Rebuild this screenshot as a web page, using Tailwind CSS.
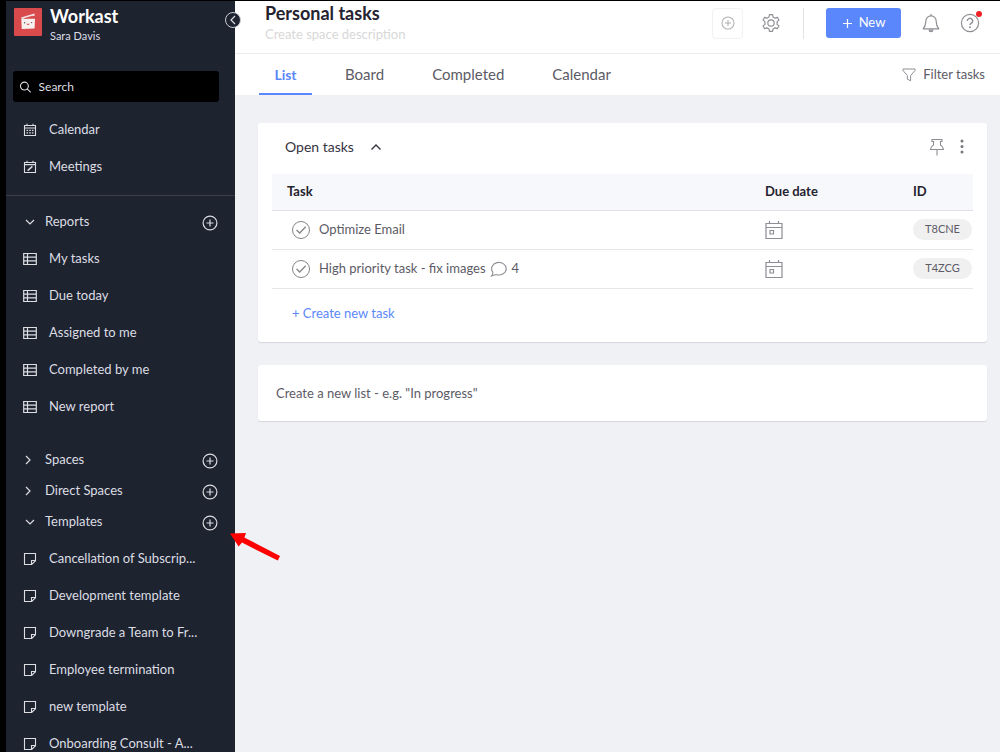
<!DOCTYPE html>
<html lang="en">
  <head>
    <meta charset="UTF-8" />
    <meta name="viewport" content="width=device-width, initial-scale=1.0" />
    <script src="https://cdn.jsdelivr.net/npm/@tailwindcss/browser@4"></script>
    <title>Workast - Personal tasks</title>
  </head>
  <body
    class="flex h-screen overflow-hidden border-t border-l-[6px] border-black bg-[#f0f1f5] font-[Lato,sans-serif] text-[13px] text-[#5c5b66]"
  >
    <!-- icons -->
    <svg class="hidden">
      <symbol id="plus-circle" viewBox="0 0 16 16" fill="none" stroke="currentColor">
        <circle cx="8" cy="8" r="6.9" stroke-width="1.2" />
        <path d="M8 4.5v7M4.5 8h7" stroke-width="1.2" />
      </symbol>
      <symbol id="down" viewBox="0 0 12 12" fill="none" stroke="currentColor">
        <path d="M2 4l4 4 4-4" stroke-width="1.2" />
      </symbol>
      <symbol id="right" viewBox="0 0 12 12" fill="none" stroke="currentColor">
        <path d="M4 2l4 4-4 4" stroke-width="1.2" />
      </symbol>
      <symbol id="report" viewBox="0 0 14 14" fill="none" stroke="currentColor">
        <path d="M.7 1.500h12.600v11H.7zM.7 5.200h12.600M.7 8.800h12.600M4.500 1.500v11" stroke-width="1.2" />
      </symbol>
      <symbol id="note" viewBox="0 0 14 14" fill="none" stroke="currentColor">
        <path d="M1.500 1.500h11v7.200l-3.800 3.800H1.500zM12.500 8.500h-4v4" stroke-width="1.1" />
      </symbol>
      <symbol id="check" viewBox="0 0 20 20" fill="none" stroke="currentColor">
        <circle cx="10" cy="10" r="8.5" />
        <path d="M5.500 10l3.200 3 6-6.200" stroke-width="1.3" />
      </symbol>
      <symbol id="date" viewBox="0 0 18 20" fill="none" stroke="currentColor">
        <path d="M1 3.500h16v15H1zM1 7.500h16M4.500 1v2.500M13.500 1v2.500" stroke-width="1.2" />
        <path d="M5 10.500h3.500V14H5z" stroke-width="1.2" />
      </symbol>
    </svg>

    <aside class="relative flex w-[229px] shrink-0 flex-col bg-[#1e2330] text-[#dcdde3]">
      <button
        class="absolute top-[11px] -right-[6px] z-10 flex size-4 items-center justify-center rounded-full border border-[#c9cad1] bg-[#1e2330]"
        aria-label="Collapse sidebar"
      >
        <svg class="size-3 rotate-180"><use href="#right" /></svg>
      </button>

      <div class="flex h-[70px] shrink-0 gap-2 px-2 pt-[7px]">
        <svg class="size-7 shrink-0" viewBox="0 0 28 28">
          <rect width="28" height="28" rx="1" fill="#d94a4c" />
          <path d="M7 9.600L20.400 5.400l.4 2.200L8 11z" fill="#f4e6e6" />
          <path d="M7.300 10.800H21L20.600 20.600 7.800 21z" fill="#f8efef" />
          <path d="M10.500 10.500l8-2.400" stroke="#d94a4c" stroke-width=".8" />
          <path d="M12.500 15.800q1.600 2.400 3.200 0z" fill="#d94a4c" />
          <circle cx="10.600" cy="14.800" r=".7" fill="#555" />
          <circle cx="17.600" cy="14.600" r=".7" fill="#555" />
        </svg>
        <div>
          <h1 class="text-lg leading-4 font-bold text-white">Workast</h1>
          <p class="text-[11px] leading-6">Sara Davis</p>
        </div>
      </div>

      <label
        class="mr-4 ml-[7px] flex h-[31px] shrink-0 items-center gap-[7px] rounded-[3px] bg-black px-[6px]"
      >
        <svg class="size-[14px]" viewBox="0 0 14 14" fill="none" stroke="currentColor" stroke-width="1.2">
          <circle cx="6" cy="6" r="4.4" />
          <path d="M9.200 9.200l3.800 3.800" />
        </svg>
        <input
          type="text"
          placeholder="Search"
          aria-label="Search"
          class="w-full min-w-0 text-xs outline-none placeholder:text-[#dcdde3]"
        />
      </label>

      <nav class="flex flex-col">
        <div class="mt-[9px] mb-[10px] flex flex-col">
          <a href="#" class="flex h-[37px] items-center gap-3 pl-[17px]">
            <svg class="size-[14px]" viewBox="0 0 14 14" fill="none" stroke="currentColor">
              <path d="M1.500 2.500h11v10h-11zM1.500 5h11M4 .8v1.700M10 .8v1.700" stroke-width="1.1" />
              <path d="M3.500 7.300h7M3.500 9.800h7" stroke-width="1.3" stroke-dasharray="1.6 1.1" />
            </svg>
            Calendar
          </a>
          <a href="#" class="flex h-[37px] items-center gap-3 pl-[17px]">
            <svg class="size-[14px]" viewBox="0 0 14 14" fill="none" stroke="currentColor">
              <path d="M1.500 2.500h11v10h-11zM1.500 4.600h11M4 .8v1.700M10 .8v1.700" stroke-width="1.1" />
              <path d="M4.600 10.600l4.800-4.200" stroke-width="1.5" />
            </svg>
            Meetings
          </a>
        </div>

        <div class="border-t border-[#3c3e4b] pt-[10px]">
          <div class="flex h-[31px] items-center px-[18px]">
            <button class="flex items-center gap-[9px]">
              <svg class="size-3"><use href="#down" /></svg>Reports
            </button>
            <button class="-mr-px ml-auto pt-[2px]" aria-label="Add report">
              <svg class="size-4"><use href="#plus-circle" /></svg>
            </button>
          </div>
          <div class="mt-[3px] flex flex-col">
            <a href="#" class="flex h-[37px] items-center gap-3 pl-[17px]">
              <svg class="size-[14px]"><use href="#report" /></svg>My tasks
            </a>
            <a href="#" class="flex h-[37px] items-center gap-3 pl-[17px]">
              <svg class="size-[14px]"><use href="#report" /></svg>Due today
            </a>
            <a href="#" class="flex h-[37px] items-center gap-3 pl-[17px]">
              <svg class="size-[14px]"><use href="#report" /></svg>Assigned to me
            </a>
            <a href="#" class="flex h-[37px] items-center gap-3 pl-[17px]">
              <svg class="size-[14px]"><use href="#report" /></svg>Completed by me
            </a>
            <a href="#" class="flex h-[37px] items-center gap-3 pl-[17px]">
              <svg class="size-[14px]"><use href="#report" /></svg>New report
            </a>
          </div>
        </div>

        <div class="mt-[19px]">
          <div class="flex h-[31px] items-center pr-[18px] pl-4">
            <button class="flex items-center gap-[11px]">
              <svg class="size-3"><use href="#right" /></svg>Spaces
            </button>
            <button class="-mr-px ml-auto pt-[2px]" aria-label="Add space">
              <svg class="size-4"><use href="#plus-circle" /></svg>
            </button>
          </div>
          <div class="flex h-[31px] items-center pr-[18px] pl-4">
            <button class="flex items-center gap-[11px]">
              <svg class="size-3"><use href="#right" /></svg>Direct Spaces
            </button>
            <button class="-mr-px ml-auto pt-[2px]" aria-label="Add direct space">
              <svg class="size-4"><use href="#plus-circle" /></svg>
            </button>
          </div>
          <div class="relative flex h-[31px] items-center px-[18px]">
            <button class="flex items-center gap-[9px]">
              <svg class="size-3"><use href="#down" /></svg>Templates
            </button>
            <button class="-mr-px ml-auto pt-[2px]" aria-label="Add template">
              <svg class="size-4"><use href="#plus-circle" /></svg>
            </button>
            <!-- arrow pointing at the add template button -->
            <svg
              class="absolute top-[26px] left-[223px] z-10 h-[30px] w-[52px]"
              viewBox="0 0 52 30"
              fill="#fe0000"
            >
              <path d="M1 1.500L17 1l-1.600 4.400L51 24l-2.200 4.600L13 10.600 9.600 14.600z" />
            </svg>
          </div>
          <div class="mt-[3px] flex flex-col">
            <a href="#" class="flex h-[37px] items-center gap-3 pl-[17px]">
              <svg class="size-[14px]"><use href="#note" /></svg>Cancellation of Subscrip...
            </a>
            <a href="#" class="flex h-[37px] items-center gap-3 pl-[17px]">
              <svg class="size-[14px]"><use href="#note" /></svg>Development template
            </a>
            <a href="#" class="flex h-[37px] items-center gap-3 pl-[17px]">
              <svg class="size-[14px]"><use href="#note" /></svg>Downgrade a Team to Fr...
            </a>
            <a href="#" class="flex h-[37px] items-center gap-3 pl-[17px]">
              <svg class="size-[14px]"><use href="#note" /></svg>Employee termination
            </a>
            <a href="#" class="flex h-[37px] items-center gap-3 pl-[17px]">
              <svg class="size-[14px]"><use href="#note" /></svg>new template
            </a>
            <a href="#" class="flex h-[37px] items-center gap-3 pl-[17px]">
              <svg class="size-[14px]"><use href="#note" /></svg>Onboarding Consult - A...
            </a>
          </div>
        </div>
      </nav>
    </aside>

    <main class="min-w-0 flex-1">
      <header class="flex h-[53px] justify-between border-b border-[#ededf0] bg-white pr-5 pl-[30px]">
        <div>
          <h2 class="text-lg leading-6 font-bold text-[#25232f]">Personal tasks</h2>
          <p class="leading-[18px] text-[#d8d8d8]">Create space description</p>
        </div>
        <div class="flex h-[44px] items-center text-[#8e8e94]">
          <button
            class="flex size-[31px] items-center justify-center rounded-sm border border-[#f1f1f2] text-[#b0b0b4]"
            aria-label="Add member"
          >
            <svg class="size-[14px]"><use href="#plus-circle" /></svg>
          </button>
          <button class="ml-[18px]" aria-label="Settings">
            <svg class="size-5" viewBox="0 0 24 24" fill="none" stroke="currentColor" stroke-width="1.4" stroke-linejoin="round">
              <path d="M9.600 4.800L10.100 2h3.800l.5 2.800 2.500 1.400 2.700-1 1.900 3.300-2.200 1.800v3.400l2.200 1.800-1.900 3.300-2.700-1-2.500 1.400-.5 2.800h-3.800l-.5-2.800-2.500-1.400-2.700 1-1.900-3.300 2.200-1.800v-3.400L2.500 8.500l1.900-3.300 2.700 1z" />
              <circle cx="12" cy="12" r="3.8" />
            </svg>
          </button>
          <div class="mx-[22px] h-[31px] w-px bg-[#e4e4e6]"></div>
          <button class="flex h-[30px] w-[75px] items-center justify-center gap-[6px] rounded-[3px] bg-[#5a87fb] text-white">
            <svg class="size-[11px]" viewBox="0 0 11 11" stroke="currentColor">
              <path d="M5.500 1v9M1 5.500h9" stroke-width="1.2" />
            </svg>
            New
          </button>
          <button class="ml-5" aria-label="Notifications">
            <svg class="size-5" viewBox="0 0 20 20" fill="none" stroke="currentColor" stroke-width="1.2" stroke-linejoin="round">
              <path d="M10 1v1.600M4.800 8.200a5.200 5.400 0 0 1 10.400 0c0 4 .8 5.400 2.600 7.600H2.200C4 13.600 4.800 12.200 4.800 8.200z" />
              <path d="M8.200 17.200a1.800 1.500 0 0 0 3.600 0z" />
            </svg>
          </button>
          <button class="relative ml-[19px]" aria-label="Help">
            <svg class="size-5" viewBox="0 0 20 20" fill="none" stroke="currentColor" stroke-width="1.2">
              <circle cx="10" cy="10" r="8.6" />
              <path d="M7.300 8a2.700 2.600 0 1 1 4.200 2.100c-1 .7-1.500 1-1.500 2" stroke-width="1.400" />
              <circle cx="10" cy="14.300" r=".4" />
            </svg>
            <span class="absolute -top-[2px] right-[-2px] size-[6px] rounded-full bg-[#ee2225]"></span>
          </button>
        </div>
      </header>

      <nav class="flex h-[41px] bg-white pr-[15px] pl-6 text-[15px]">
        <a href="#" class="flex w-[53px] items-center justify-center border-b-2 border-[#5a87fb] pt-[2px] text-sm font-bold text-[#5a87fb]">List</a>
        <a href="#" class="ml-[33px] flex items-center">Board</a>
        <a href="#" class="ml-12 flex items-center">Completed</a>
        <a href="#" class="ml-12 flex items-center">Calendar</a>
        <button class="ml-auto flex items-center gap-[7px] text-[13px]">
          <svg class="size-[14px] text-[#8e8e94]" viewBox="0 0 14 14" fill="none" stroke="currentColor" stroke-linejoin="round">
            <path d="M1 1h12v1.500L8.600 7.600v5.200l-3.200-1.600V7.600L1 2.500z" />
          </svg>
          Filter tasks
        </button>
      </nav>

      <div class="flex flex-col gap-[23px] pt-7 pr-[13px] pl-[23px]">
        <section class="rounded-[3px] bg-white px-[14px] pb-[10px] shadow-[0_1px_1px_#d6d7dc]">
          <div class="flex h-[51px] items-center pr-2 pb-1 pl-[13px]">
            <button class="flex items-center gap-4 text-sm text-[#35333f]">
              Open tasks
              <svg class="size-3" viewBox="0 0 12 12" fill="none" stroke="currentColor" stroke-width="1.400">
                <path d="M1.500 8.500L6 4l4.500 4.500" />
              </svg>
            </button>
            <button class="ml-auto text-[#8e8e94]" aria-label="Pin list">
              <svg class="h-[18px] w-4" viewBox="0 0 16 18" fill="none" stroke="currentColor" stroke-width="1.100">
                <path d="M3 1.500h10v2h-1.500v3.500q2.500 1.300 3 4.500h-13q.5-3.200 3-4.500V3.500H3zM8 11.500v6" />
              </svg>
            </button>
            <button class="ml-[14px] text-[#77777d]" aria-label="List menu">
              <svg class="h-4 w-[6px]" viewBox="0 0 6 16" fill="currentColor">
                <circle cx="3" cy="2" r="1.500" />
                <circle cx="3" cy="7.500" r="1.500" />
                <circle cx="3" cy="13" r="1.500" />
              </svg>
            </button>
          </div>

          <table class="w-full table-fixed text-left">
            <thead class="bg-[#f7f8fb] text-[#25232f]">
              <tr class="h-9 border-b border-[#dfe0e5]">
                <th class="pl-[15px] font-bold">Task</th>
                <th class="w-[148px] font-bold">Due date</th>
                <th class="w-[60px] font-bold">ID</th>
              </tr>
            </thead>
            <tbody>
              <tr class="h-[39px] border-b border-[#e6e7ea]">
                <td class="pl-[19px]">
                  <div class="flex items-center">
                    <button class="mr-2 text-[#85858a]" aria-label="Complete Optimize Email">
                      <svg class="size-5"><use href="#check" /></svg>
                    </button>
                    Optimize Email
                  </div>
                </td>
                <td>
                  <button class="block text-[#8e8e94]" aria-label="Set due date">
                    <svg class="h-5 w-[18px]"><use href="#date" /></svg>
                  </button>
                </td>
                <td>
                  <span class="flex h-[21px] w-[59px] items-center justify-center rounded-full bg-[#f0f0f0] text-[11px]">T8CNE</span>
                </td>
              </tr>
              <tr class="h-[39px] border-b border-[#e6e7ea]">
                <td class="pl-[19px]">
                  <div class="flex items-center">
                    <button class="mr-2 text-[#85858a]" aria-label="Complete High priority task">
                      <svg class="size-5"><use href="#check" /></svg>
                    </button>
                    High priority task - fix images
                    <svg class="mr-1 ml-1 size-[18px] text-[#8e8e94]" viewBox="0 0 18 18" fill="none" stroke="currentColor" stroke-width="1.100">
                      <path d="M2.800 12.200A7.300 6.300 0 1 1 6 14.500L1.500 16q1.500-1.800 1.300-3.800z" />
                    </svg>
                    4
                  </div>
                </td>
                <td>
                  <button class="block text-[#8e8e94]" aria-label="Set due date">
                    <svg class="h-5 w-[18px]"><use href="#date" /></svg>
                  </button>
                </td>
                <td>
                  <span class="flex h-[21px] w-[59px] items-center justify-center rounded-full bg-[#f0f0f0] text-[11px]">T4ZCG</span>
                </td>
              </tr>
            </tbody>
          </table>

          <button class="ml-5 flex h-[43px] items-center pt-[7px] text-[#5a87fb]">+ Create new task</button>
        </section>

        <input
          type="text"
          placeholder='Create a new list - e.g. "In progress"'
          aria-label="Create a new list"
          class="h-[56px] w-full rounded-[3px] bg-white px-[18px] shadow-[0_1px_1px_#d6d7dc] outline-none placeholder:text-[#5c5b66]"
        />
      </div>
    </main>
  </body>
</html>
